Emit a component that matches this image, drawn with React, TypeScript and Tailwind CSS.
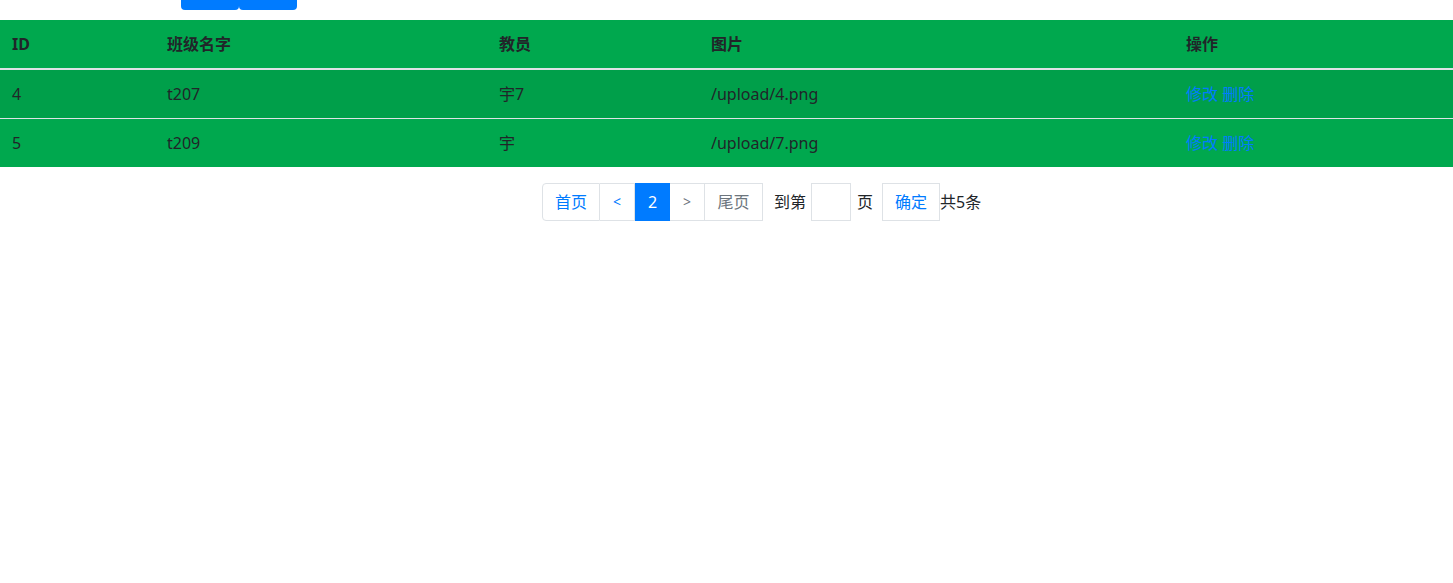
import React from "react";

// 班级列表（第2页）
const rows = [
  { id: 4, name: "t207", teacher: "宇7", pic: "/upload/4.png" },
  { id: 5, name: "t209", teacher: "宇", pic: "/upload/7.png" },
];

const font = "font-['Noto_Sans','Noto_Sans_CJK_SC',sans-serif]";

export default function App() {
  return (
    <div className={`${font} min-h-[583px] w-full bg-white text-base text-[#212529]`}>
      {/* 顶部按钮（页面已滚动，只露出底部） */}
      <div className="flex h-[10px] items-end overflow-hidden pl-[181px]">
        <button aria-label="添加" className="h-[38px] w-[58px] shrink-0 rounded bg-[#007bff]" />
        <button aria-label="查询" className="h-[38px] w-[58px] shrink-0 rounded bg-[#007bff]" />
      </div>

      <table className="mt-[10px] w-full border-collapse bg-[#00a84e]">
        <thead>
          <tr className="border-b-2 border-[#dee2e6]">
            <th className="w-[155px] px-3 py-3 text-left font-bold leading-6">ID</th>
            <th className="w-[332px] px-3 py-3 text-left font-bold leading-6">班级名字</th>
            <th className="w-[212px] px-3 py-3 text-left font-bold leading-6">教员</th>
            <th className="w-[475px] px-3 py-3 text-left font-bold leading-6">图片</th>
            <th className="px-3 py-3 text-left font-bold leading-6">操作</th>
          </tr>
        </thead>
        <tbody>
          {rows.map((r, i) => (
            <tr
              key={r.id}
              className={`${i > 0 ? "border-t border-[#dee2e6]" : ""} ${i % 2 === 0 ? "bg-[#009f4a]" : ""}`}
            >
              <td className="px-3 py-3 leading-6">{r.id}</td>
              <td className="px-3 py-3 leading-6">{r.name}</td>
              <td className="px-3 py-3 leading-6">{r.teacher}</td>
              <td className="px-3 py-3 leading-6">{r.pic}</td>
              <td className="px-3 py-3 leading-6">
                <a className="text-[#007bff]">修改</a> <a className="text-[#007bff]">删除</a>
              </td>
            </tr>
          ))}
        </tbody>
      </table>

      {/* 分页 */}
      <div className="mt-4 flex items-center pl-[542px]">
        <ul className="flex h-[38px]">
          <li className="flex w-[58px] items-center justify-center rounded-l border border-[#dee2e6] text-[#007bff]">首页</li>
          <li className="flex w-[35px] items-center justify-center border border-l-0 border-[#dee2e6] text-sm text-[#007bff]">&lt;</li>
          <li className="flex w-[35px] items-center justify-center bg-[#007bff] text-white">2</li>
          <li className="flex w-[35px] items-center justify-center border border-l-0 border-[#dee2e6] text-sm text-[#6c757d]">&gt;</li>
          <li className="flex w-[58px] items-center justify-center border border-l-0 border-[#dee2e6] text-[#6c757d]">尾页</li>
        </ul>
        <span className="ml-[11px]">到第</span>
        <input className="ml-[5px] h-[38px] w-[40px] border border-[#dee2e6] outline-none" />
        <span className="ml-[6px]">页</span>
        <button className="ml-[9px] h-[38px] w-[58px] border border-[#dee2e6] text-[#007bff]">确定</button>
        <span>共5条</span>
      </div>
    </div>
  );
}
